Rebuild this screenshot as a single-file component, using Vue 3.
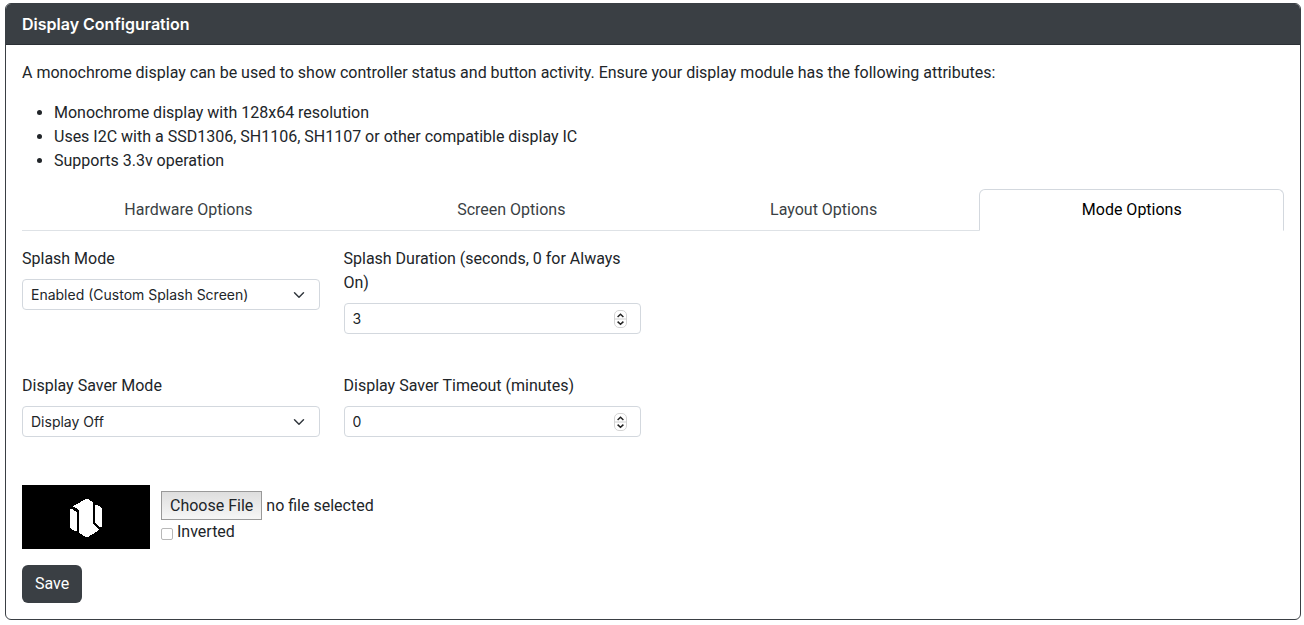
<script setup>
import { ref } from 'vue'

const tabs = ['Hardware Options', 'Screen Options', 'Layout Options', 'Mode Options']
const activeTab = ref('Mode Options')
const splashMode = ref('custom')
const splashDuration = ref(3)
const saverMode = ref('off')
const saverTimeout = ref(0)
const inverted = ref(false)
const fileName = ref('no file selected')

function onFile(event) {
  const file = event.target.files[0]
  fileName.value = file ? file.name : 'no file selected'
}
</script>

<template>
  <form class="card" @submit.prevent>
    <header class="card-header"><strong>Display Configuration</strong></header>
    <div class="card-body">
      <p>
        A monochrome display can be used to show controller status and button activity. Ensure your display module has
        the following attributes:
      </p>
      <ul class="attributes">
        <li>Monochrome display with 128x64 resolution</li>
        <li>Uses I2C with a SSD1306, SH1106, SH1107 or other compatible display IC</li>
        <li>Supports 3.3v operation</li>
      </ul>

      <div class="tabs" role="tablist">
        <button
          v-for="tab in tabs"
          :key="tab"
          type="button"
          role="tab"
          class="tab"
          :class="{ active: tab === activeTab }"
          :aria-selected="tab === activeTab"
          @click="activeTab = tab"
        >
          {{ tab }}
        </button>
      </div>

      <div class="row">
        <div class="field">
          <label for="splash-mode">Splash Mode</label>
          <select id="splash-mode" v-model="splashMode" class="control select">
            <option value="custom">Enabled (Custom Splash Screen)</option>
          </select>
        </div>
        <div class="field">
          <label for="splash-duration">Splash Duration (seconds, 0 for Always On)</label>
          <div class="number">
            <input id="splash-duration" v-model="splashDuration" type="number" min="0" class="control" />
            <svg class="stepper" viewBox="0 0 13 18" aria-hidden="true">
              <rect x="0.5" y="0.5" width="12" height="17" rx="4.5" fill="#fff" stroke="#d4d4d4" />
              <path d="M0.5 9h12" stroke="#d0d0d0" fill="none" />
              <path d="M3.6 7 6.5 4.3 9.4 7M3.6 11.6l2.9 2.7 2.9-2.7" stroke="#222" stroke-width="1.5" fill="none" />
            </svg>
          </div>
        </div>
      </div>

      <div class="row">
        <div class="field">
          <label for="saver-mode">Display Saver Mode</label>
          <select id="saver-mode" v-model="saverMode" class="control select">
            <option value="off">Display Off</option>
          </select>
        </div>
        <div class="field">
          <label for="saver-timeout">Display Saver Timeout (minutes)</label>
          <div class="number">
            <input id="saver-timeout" v-model="saverTimeout" type="number" min="0" class="control" />
            <svg class="stepper" viewBox="0 0 13 18" aria-hidden="true">
              <rect x="0.5" y="0.5" width="12" height="17" rx="4.5" fill="#fff" stroke="#d4d4d4" />
              <path d="M0.5 9h12" stroke="#d0d0d0" fill="none" />
              <path d="M3.6 7 6.5 4.3 9.4 7M3.6 11.6l2.9 2.7 2.9-2.7" stroke="#222" stroke-width="1.5" fill="none" />
            </svg>
          </div>
        </div>
      </div>

      <div class="splash">
        <svg class="preview" :class="{ inverted }" viewBox="0 0 128 64" shape-rendering="crispEdges" aria-hidden="true">
          <rect width="128" height="64" fill="#000" />
          <g fill="#fff">
            <path d="M48 24h2l3 2 2 1v19h-2l-5-3z" />
            <path d="M64 14h2l5 3v22l6 5v1l-3 2-8 5h-2l-7-4V25l-3-2-3-1v-1l4-2z" />
            <path d="M73 20h2l4 2 1 2v18h-2l-5-4z" />
          </g>
        </svg>
        <div class="splash-options">
          <div class="file">
            <label for="splash-file" class="file-button">Choose File</label>
            <span>{{ fileName }}</span>
            <input id="splash-file" type="file" class="file-input" @change="onFile" />
          </div>
          <div class="check">
            <input id="inverted" v-model="inverted" type="checkbox" />
            <label for="inverted">Inverted</label>
          </div>
        </div>
      </div>

      <button type="submit" class="save">Save</button>
    </div>
  </form>
</template>

<style>
body {
  background: #fff;
}
</style>

<style scoped>
* {
  box-sizing: border-box;
}

.card {
  margin: 3px 3px 0 5px;
  border: 1px solid #3a3f44;
  border-radius: 6px;
  background: #fff;
  color: #212529;
  font: 16px/24px Roboto, "Liberation Sans", sans-serif;
}

.card-header {
  padding: 8px 16px;
  border-bottom: 1px solid #2b3035;
  border-radius: 5px 5px 0 0;
  background: #3a3f44;
  color: #fff;
  font-family: Inter, "Liberation Sans", sans-serif;
}

strong {
  font-weight: 600;
}

.card-body {
  padding: 16px;
}

p {
  margin: 0 0 16px;
}

.attributes {
  margin: 0 0 16px;
  padding-left: 32px;
}

.tabs {
  display: flex;
  margin-bottom: 16px;
  border-bottom: 1px solid #dee2e6;
}

.tab {
  flex: 1 1 auto;
  margin-bottom: -1px;
  padding: 8px 16px;
  border: 1px solid transparent;
  border-radius: 6px 6px 0 0;
  background: none;
  color: #3a3f44;
  font: inherit;
}

.tab.active {
  border-color: #d3d8de #d3d8de #fff;
  background: #fff;
  color: #000;
}

.row {
  display: grid;
  grid-template-columns: repeat(4, 1fr);
  gap: 24px;
  align-items: start;
  margin-bottom: 40px;
}

.field {
  display: grid;
  gap: 8px;
}

.control {
  display: block;
  width: 100%;
  height: 31px;
  padding: 4px 8px;
  border: 1px solid #d3d8de;
  border-radius: 4px;
  background-color: #fff;
  color: #212529;
  font: 14px/21px Inter, "Liberation Sans", sans-serif;
  appearance: none;
}

.select {
  padding-right: 36px;
  background-image: url("data:image/svg+xml,%3Csvg xmlns='http://www.w3.org/2000/svg' viewBox='0 0 16 16'%3E%3Cpath fill='none' stroke='%23343a40' stroke-linecap='round' stroke-linejoin='round' stroke-width='2' d='m2 5 6 6 6-6'/%3E%3C/svg%3E");
  background-repeat: no-repeat;
  background-position: right 14px center;
  background-size: 12px 12px;
}

.number {
  position: relative;
}

.number .control {
  appearance: textfield;
}

.stepper {
  position: absolute;
  top: 7px;
  right: 14px;
  width: 13px;
  height: 18px;
  pointer-events: none;
}

.splash {
  display: flex;
  gap: 11px;
  margin: 48px 0 16px;
}

.preview {
  width: 128px;
  height: 64px;
}

.inverted {
  filter: invert(1);
}

.splash-options {
  padding-top: 6px;
}

.file {
  position: relative;
  display: flex;
  align-items: center;
  gap: 4px;
}

.file-button {
  padding: 2px 8px;
  border: 1px solid #999;
  background: linear-gradient(#dedede, #f6f6f6);
  line-height: 23px;
}

.file-input {
  position: absolute;
  inset: 0;
  width: 100%;
  opacity: 0;
}

.check {
  display: flex;
  align-items: center;
  gap: 4px;
}

.check input {
  width: 12px;
  height: 12px;
  margin: 3px 0 0;
  border: 1px solid #b8b8b8;
  border-radius: 2px;
  background: #fff;
  appearance: none;
}

.check input:checked {
  background: #3a3f44;
}

.save {
  display: block;
  padding: 7px 13px;
  border: 0;
  border-radius: 6px;
  background: #3a3f44;
  color: #fff;
  font: inherit;
}
</style>
